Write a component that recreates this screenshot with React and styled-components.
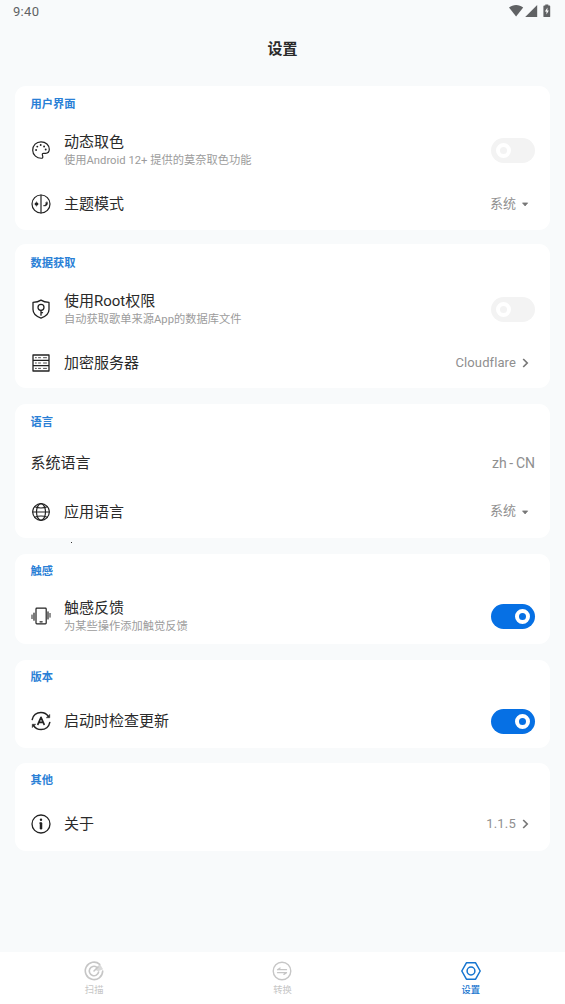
import React from 'react';
import styled, { createGlobalStyle } from 'styled-components';

const Global = createGlobalStyle`
  * { box-sizing: border-box; }
  body { margin: 0; background: #f8fafb; }
`;
const Screen = styled.div`
  width: 565px;
  height: 1004px;
  overflow: hidden;
  display: flex;
  flex-direction: column;
  background: #f8fafb;
  color: #222;
  font-family: Roboto, 'Noto Sans CJK SC', sans-serif;
`;
const StatusBar = styled.header`
  height: 24px;
  flex: none;
  display: flex;
  justify-content: space-between;
  padding: 0 13px;
  font-size: 13px;
  line-height: 24px;
  letter-spacing: 0.3px;
  color: #606264;
`;
const Title = styled.h1`
  margin: 0;
  height: 61px;
  flex: none;
  font-size: 15px;
  font-weight: 700;
  line-height: 50px;
  text-align: center;
  color: #2a2a2a;
`;
const Main = styled.main`
  flex: 1;
  padding: 1px 15px 0;
`;
const Card = styled.section`
  position: relative;
  background: #fff;
  border-radius: 11px;
  margin-bottom: ${(p) => p.$gap}px;
  padding: 0 15px ${(p) => p.$bottom || 0}px 15.5px;
`;
const Heading = styled.h2`
  margin: 0;
  height: ${(p) => p.$height}px;
  font-size: 11.25px;
  font-weight: 700;
  line-height: ${(p) => p.$line}px;
  color: #2a80d6;
`;
const Row = styled.div`
  height: ${(p) => p.$height}px;
  display: flex;
  align-items: center;
`;
const IconSlot = styled.span`
  width: 33.5px;
  padding-left: 0.5px;
  flex: none;
  display: flex;
`;
const Labels = styled.div`
  flex: 1;
`;
const Name = styled.div`
  font-size: 15px;
  line-height: 20px;
  font-weight: 400;
  color: #2a2a2a;
`;
const Note = styled.div`
  font-size: 11.25px;
  line-height: 17px;
  margin-bottom: -1px;
  font-weight: 400;
  color: #9c9c9c;
`;
const Value = styled.span`
  font-size: ${(p) => p.$size || 13}px;
  line-height: 18px;
  letter-spacing: ${(p) => p.$track || 0}px;
  word-spacing: ${(p) => p.$words || 0}px;
  color: #8f8f8f;
`;
const Choice = styled.div`
  display: flex;
  align-items: center;
  gap: 2px;
  padding-right: 3px;
`;
const ValueText = styled(Value)`
  margin-top: ${(p) => (p.$raised ? -1 : 0)}px;
`;
const Track = styled.span`
  width: 44px;
  height: 25px;
  border-radius: 13px;
  display: flex;
  align-items: center;
  padding: 0 5px;
  justify-content: ${(p) => (p.$on ? 'flex-end' : 'flex-start')};
  background: ${(p) => (p.$on ? '#0670e4' : '#f3f3f3')};
`;
const Knob = styled.span`
  width: 15px;
  height: 15px;
  border-radius: 50%;
  border: 4px solid #fff;
`;
const Speck = styled.i`
  position: absolute;
  left: 56px;
  bottom: -5px;
  width: 1px;
  height: 1px;
  background: #333;
`;
const Nav = styled.nav`
  height: 52px;
  flex: none;
  display: flex;
  background: #fff;
`;
const Tab = styled.div`
  flex: 1;
  display: flex;
  flex-direction: column;
  align-items: center;
  padding-top: 9px;
  font-size: 9.3px;
  line-height: 18px;
  font-weight: ${(p) => (p.$active ? 500 : 400)};
  color: ${(p) => (p.$active ? '#1474cf' : '#c6c6c6')};
`;
const StatusSvg = styled.svg`
  margin-top: 4px;
`;

const Svg = ({ size = 20, w = 1.5, children }) => (
  <svg width={size} height={size} viewBox="0 0 20 20" fill="none" stroke="currentColor" strokeWidth={w} strokeLinecap="round" strokeLinejoin="round">
    {children}
  </svg>
);
const Palette = () => (
  <Svg w={1.2}>
    <path d="M11 18.2C5.800 18.600 1.700 15 1.700 10.200 1.700 5.400 5.300 1.800 10 1.800c4.800 0 8.300 3.300 8.300 7.500 0 2.500-1.500 4-3.700 4h-2.100c-1 0-1.400.8-1.100 1.700l.3 1.100c.3 1.200 0 2-.7 2.100z" />
    <g fill="currentColor" stroke="none">
      <circle cx="5.100" cy="10" r=".95" /><circle cx="6.300" cy="6.600" r=".95" /><circle cx="9.700" cy="5" r=".95" /><circle cx="13.100" cy="6.500" r=".95" /><circle cx="14.700" cy="9.500" r=".95" />
    </g>
  </Svg>
);
const Theme = () => (
  <Svg w={1.2}>
    <circle cx="10" cy="10" r="9" /><path d="M10 1v18" />
    <circle cx="5.500" cy="10" r="1.700" fill="currentColor" stroke="none" />
    <path d="M5.500 7.600v4.800M3.100 10h4.800" strokeWidth=".4" />
    <path d="M16.300 8.200c.8 2.400-.9 4.300-3.900 3.500 2-.2 2.800-1.400 2.500-2.900z" fill="currentColor" strokeWidth=".6" />
  </Svg>
);
const Shield = () => (
  <Svg w={1.3}>
    <path d="M10 1.100C7.500 2.700 5 3.200 2 3.400v7.200c0 4.200 3.500 7 8 8.500 4.500-1.500 8-4.300 8-8.500V3.400c-3-.2-5.500-.7-8-2.300z" />
    <circle cx="10" cy="8.300" r="3" /><path d="M10 11.300v4.900M10 13.700h1.500" />
  </Svg>
);
const Server = () => (
  <Svg w={1.3}>
    <path d="M2 2h16v5.300H2zM2 7.300h16v5.400H2zM2 12.700h16V18H2z" />
    <path d="M4.400 4.700h1M7.500 4.700h2M12.500 4.700h3M4.400 10h1M7.500 10h2M12.500 10h3M4.400 15.400h1M7.500 15.400h2M12.500 15.400h3" strokeWidth=".8" />
  </Svg>
);
const Globe = () => (
  <Svg w={1.2}>
    <circle cx="10" cy="10" r="8.300" /><ellipse cx="10" cy="10" rx="4.500" ry="8.300" />
    <path d="M1.700 10h16.600M3.700 4.800c4 1.500 8.600 1.500 12.600 0M3.700 15.200c4-1.500 8.600-1.500 12.600 0" />
  </Svg>
);
const Vibrate = () => (
  <Svg w={1.2}>
    <rect x="5" y="2.100" width="10.200" height="15.800" rx=".8" />
    <path d="M9 15.800h2.200" /><path d="M3 7v7.200M17 5.800v7.200" strokeWidth="1.200" /><path d="M1 9v3.600M19 7.400v3.800" strokeWidth="1" />
  </Svg>
);
const Update = () => (
  <Svg w={1.5}>
    <path d="M1.200 8.600C2 4.300 5.600 1.400 9.900 1.400c3.200 0 5.900 1.500 7.400 4M18.800 11.400c-.8 4.300-4.400 7.200-8.700 7.200-3.200 0-5.900-1.500-7.400-4" />
    <path d="M18.800 3.600v3.200h-3.400zM1.200 16.400v-3.200h3.400z" fill="currentColor" strokeWidth=".4" />
    <path d="M6.900 13.300L10 6.300l3.100 7M8.200 11.300h3.600" strokeWidth="1.700" />
  </Svg>
);
const Info = () => (
  <Svg w={1.3}>
    <circle cx="10" cy="10" r="9" /><circle cx="10" cy="5.800" r="1.200" fill="currentColor" stroke="none" />
    <path d="M8.700 9H10" strokeWidth="1.200" /><path d="M10 9.500v4.800" strokeWidth="2.500" />
  </Svg>
);
const ScanIcon = () => (
  <Svg w={1.6}>
    <path d="M15.700 3.300A8.700 8.700 0 1 0 18.700 10" />
    <path d="M12.600 6.100A4.700 4.700 0 1 0 14.600 11M10 10l4-4" />
    <path d="M11.200 8.800l4.500-6 3.400 5.400-5 2z" fill="currentColor" stroke="none" opacity=".65" />
  </Svg>
);
const ConvertIcon = () => (
  <Svg w={1.4}>
    <circle cx="10" cy="10" r="8.800" /><path d="M5.500 8.700h9M5.500 8.700l2.600-1.700M14.500 11.700h-9M14.500 11.700l-2.600 1.700" strokeWidth="1.300" />
  </Svg>
);
const SettingsIcon = () => (
  <Svg w={1.5}>
    <path d="M5.400 1.800h9.200L19.200 10l-4.600 8.200H5.400L.8 10z" /><circle cx="10" cy="10" r="3.900" />
  </Svg>
);
const StatusIcons = () => (
  <StatusSvg width="43" height="14" viewBox="0 0 43 14" fill="#606264">
    <path d="M0 3.600C4 .2 10.200.2 14.200 3.600L7.100 12.500z" />
    <path d="M28.200 1v12H16.200z" />
    <path d="M36.300 1.500V.5h3v1h1.200q.7 0 .7.700v10.200q0 .7-.7.700h-5.400q-.7 0-.7-.7V2.200q0-.7.700-.7z" />
    <path d="M38.500 3.400l-2.600 4.200h1.600v3l2.300-4.100h-1.500z" fill="#fff" />
  </StatusSvg>
);
const Arrow = ({ type }) => (
  <svg width="14" height="12" viewBox="0 0 14 12" fill="none">
    {type === 'down'
      ? <path d="M4.500 4.900h5.200L7.100 8z" fill="#777" stroke="#777" strokeWidth=".7" />
      : <path d="M5.200 2l4 4-4 4" stroke="#777" strokeWidth="1.700" />}
  </svg>
);

const Switch = ({ on }) => <Track $on={on}><Knob /></Track>;

const Setting = ({ height, icon, name, note, children }) => (
  <Row $height={height}>
    {icon && <IconSlot>{icon}</IconSlot>}
    <Labels>
      <Name>{name}</Name>
      {note && <Note>{note}</Note>}
    </Labels>
    {children}
  </Row>
);
const Pick = ({ text, arrow, track }) => (
  <Choice>
    <ValueText $track={track} $raised={arrow === 'down'}>{text}</ValueText>
    <Arrow type={arrow} />
  </Choice>
);

export default function App() {
  return (
    <Screen>
      <Global />
      <StatusBar><span>9:40</span><StatusIcons /></StatusBar>
      <Title>设置</Title>
      <Main>
        <Card $gap={14}>
          <Heading $height={36} $line={38}>用户界面</Heading>
          <Setting height={56} icon={<Palette />} name="动态取色" note="使用Android 12+ 提供的莫奈取色功能"><Switch /></Setting>
          <Setting height={52} icon={<Theme />} name="主题模式"><Pick text="系统" arrow="down" /></Setting>
        </Card>
        <Card $gap={16}>
          <Heading $height={37} $line={40}>数据获取</Heading>
          <Setting height={56} icon={<Shield />} name="使用Root权限" note="自动获取歌单来源App的数据库文件"><Switch /></Setting>
          <Setting height={51} icon={<Server />} name="加密服务器"><Pick text="Cloudflare" arrow="right" track={0.1} /></Setting>
        </Card>
        <Card $gap={16} $bottom={2}>
          <Heading $height={34} $line={38}>语言</Heading>
          <Setting height={49} name="系统语言"><Value $size={14} $words={-0.8}>zh - CN</Value></Setting>
          <Setting height={49} icon={<Globe />} name="应用语言"><Pick text="系统" arrow="down" /></Setting>
          <Speck />
        </Card>
        <Card $gap={16}>
          <Heading $height={34} $line={35}>触感</Heading>
          <Setting height={56} icon={<Vibrate />} name="触感反馈" note="为某些操作添加触觉反馈"><Switch on /></Setting>
        </Card>
        <Card $gap={15}>
          <Heading $height={34} $line={36}>版本</Heading>
          <Setting height={54} icon={<Update />} name="启动时检查更新"><Switch on /></Setting>
        </Card>
        <Card $gap={0}>
          <Heading $height={34} $line={36}>其他</Heading>
          <Setting height={54} icon={<Info />} name="关于"><Pick text="1.1.5" arrow="right" track={0.2} /></Setting>
        </Card>
      </Main>
      <Nav>
        <Tab><ScanIcon />扫描</Tab>
        <Tab><ConvertIcon />转换</Tab>
        <Tab $active><SettingsIcon />设置</Tab>
      </Nav>
    </Screen>
  );
}
